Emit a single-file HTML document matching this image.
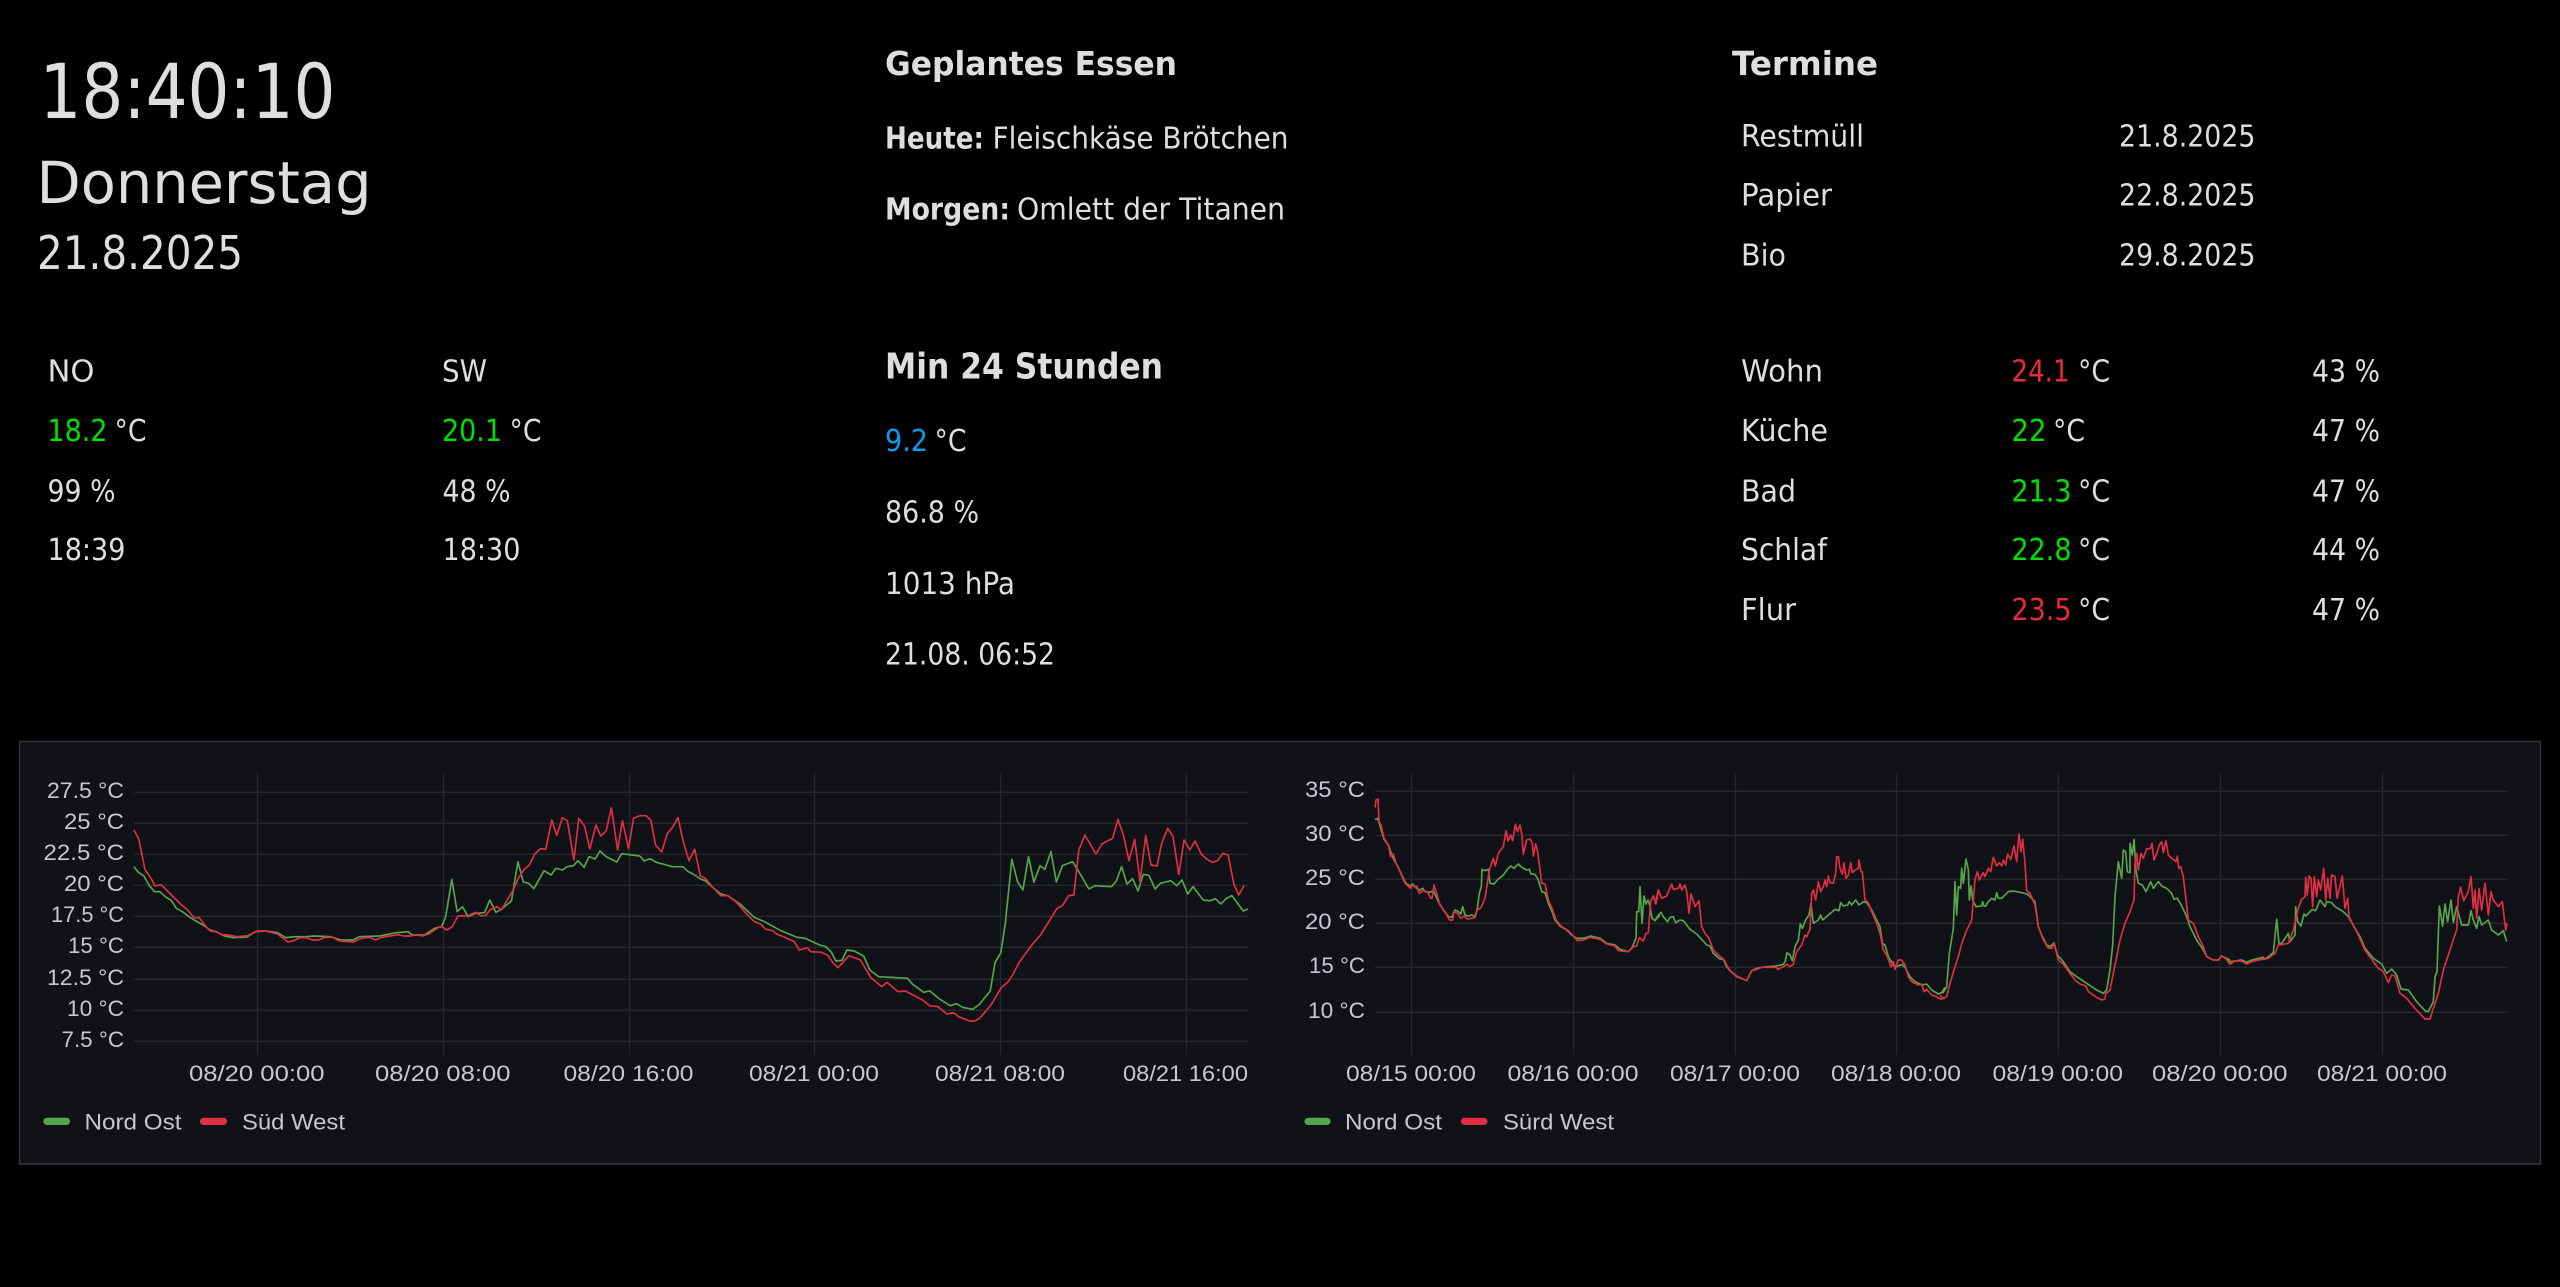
<!DOCTYPE html>
<html lang="de">
<head>
<meta charset="utf-8">
<title>Dashboard</title>
<style>
html,body{margin:0;padding:0;background:#000;width:2560px;height:1287px;overflow:hidden}
svg{display:block}
text{font-family:"DejaVu Sans","Liberation Sans",sans-serif;fill:#dedede;font-size:30px}
.b{font-weight:700}
.g{fill:#00e000}.r{fill:#e8293e}.c{fill:#0a9bec}
.a text{font-family:"Liberation Sans",sans-serif;font-size:22px;fill:#c6c6d6}
.l{fill:none;stroke-width:1.65;stroke-linejoin:round;vector-effect:non-scaling-stroke}
.gn{stroke:#56a64b}.rd{stroke:#e02f44}
.gr line{stroke:#27282d;stroke-width:1.4}
</style>
</head>
<body>
<svg width="2560" height="1287" viewBox="0 0 2560 1287" xmlns="http://www.w3.org/2000/svg">
<rect width="2560" height="1287" fill="#000"/>

<!-- clock -->
<text x="39.5" y="118" style="font-size:76px" textLength="296" lengthAdjust="spacingAndGlyphs">18:40:10</text>
<text x="36.5" y="203" style="font-size:58px" textLength="335" lengthAdjust="spacingAndGlyphs">Donnerstag</text>
<text x="37" y="269" style="font-size:46px" textLength="206" lengthAdjust="spacingAndGlyphs">21.8.2025</text>

<!-- outdoor -->
<text x="47.5" y="381.5" textLength="47" lengthAdjust="spacingAndGlyphs">NO</text>
<text x="47.5" y="441.2" class="g" textLength="60" lengthAdjust="spacingAndGlyphs">18.2</text>
<text x="114.5" y="441.2" textLength="32" lengthAdjust="spacingAndGlyphs">°C</text>
<text x="47.5" y="501.3" textLength="68" lengthAdjust="spacingAndGlyphs">99 %</text>
<text x="47.5" y="560.1" textLength="78" lengthAdjust="spacingAndGlyphs">18:39</text>
<text x="442" y="381.5" textLength="45" lengthAdjust="spacingAndGlyphs">SW</text>
<text x="442" y="441.2" class="g" textLength="60" lengthAdjust="spacingAndGlyphs">20.1</text>
<text x="509.5" y="441.2" textLength="32" lengthAdjust="spacingAndGlyphs">°C</text>
<text x="442.5" y="501.3" textLength="68" lengthAdjust="spacingAndGlyphs">48 %</text>
<text x="442.5" y="560.1" textLength="78" lengthAdjust="spacingAndGlyphs">18:30</text>

<!-- food -->
<text x="885" y="74.8" class="b" style="font-size:33px" textLength="292" lengthAdjust="spacingAndGlyphs">Geplantes Essen</text>
<text x="885" y="148.5" class="b" textLength="99" lengthAdjust="spacingAndGlyphs">Heute:</text>
<text x="992.5" y="148.5" textLength="296" lengthAdjust="spacingAndGlyphs">Fleischkäse Brötchen</text>
<text x="885" y="219.6" class="b" textLength="125" lengthAdjust="spacingAndGlyphs">Morgen:</text>
<text x="1017" y="219.6" textLength="268" lengthAdjust="spacingAndGlyphs">Omlett der Titanen</text>

<!-- min -->
<text x="885" y="378.3" class="b" style="font-size:36px" textLength="278" lengthAdjust="spacingAndGlyphs">Min 24 Stunden</text>
<text x="885" y="451.2" class="c" textLength="43" lengthAdjust="spacingAndGlyphs">9.2</text>
<text x="934.5" y="451.2" textLength="32" lengthAdjust="spacingAndGlyphs">°C</text>
<text x="885" y="522.4" textLength="94" lengthAdjust="spacingAndGlyphs">86.8 %</text>
<text x="885" y="594" textLength="130" lengthAdjust="spacingAndGlyphs">1013 hPa</text>
<text x="885" y="664.7" textLength="170" lengthAdjust="spacingAndGlyphs">21.08. 06:52</text>

<!-- dates -->
<text x="1732" y="74.8" class="b" style="font-size:33px" textLength="146" lengthAdjust="spacingAndGlyphs">Termine</text>
<text x="1741" y="146.5" textLength="123" lengthAdjust="spacingAndGlyphs">Restmüll</text>
<text x="2119" y="146.5" textLength="136.5" lengthAdjust="spacingAndGlyphs">21.8.2025</text>
<text x="1741" y="205.5" textLength="91" lengthAdjust="spacingAndGlyphs">Papier</text>
<text x="2119" y="205.5" textLength="136.5" lengthAdjust="spacingAndGlyphs">22.8.2025</text>
<text x="1741" y="265.3" textLength="45" lengthAdjust="spacingAndGlyphs">Bio</text>
<text x="2119" y="265.3" textLength="136.5" lengthAdjust="spacingAndGlyphs">29.8.2025</text>

<!-- indoor -->
<text x="1741" y="381.5" textLength="82" lengthAdjust="spacingAndGlyphs">Wohn</text>
<text x="2011.5" y="381.5" class="r" textLength="58" lengthAdjust="spacingAndGlyphs">24.1</text>
<text x="2078" y="381.5" textLength="32" lengthAdjust="spacingAndGlyphs">°C</text>
<text x="2312" y="381.5" textLength="68" lengthAdjust="spacingAndGlyphs">43 %</text>
<text x="1741" y="441.2" textLength="87" lengthAdjust="spacingAndGlyphs">Küche</text>
<text x="2011.5" y="441.2" class="g" textLength="35" lengthAdjust="spacingAndGlyphs">22</text>
<text x="2053" y="441.2" textLength="32" lengthAdjust="spacingAndGlyphs">°C</text>
<text x="2312" y="441.2" textLength="68" lengthAdjust="spacingAndGlyphs">47 %</text>
<text x="1741" y="501.3" textLength="55" lengthAdjust="spacingAndGlyphs">Bad</text>
<text x="2011.5" y="501.3" class="g" textLength="60" lengthAdjust="spacingAndGlyphs">21.3</text>
<text x="2078" y="501.3" textLength="32" lengthAdjust="spacingAndGlyphs">°C</text>
<text x="2312" y="501.3" textLength="68" lengthAdjust="spacingAndGlyphs">47 %</text>
<text x="1741" y="560.1" textLength="86" lengthAdjust="spacingAndGlyphs">Schlaf</text>
<text x="2011.5" y="560.1" class="g" textLength="60" lengthAdjust="spacingAndGlyphs">22.8</text>
<text x="2078" y="560.1" textLength="32" lengthAdjust="spacingAndGlyphs">°C</text>
<text x="2312" y="560.1" textLength="68" lengthAdjust="spacingAndGlyphs">44 %</text>
<text x="1741" y="619.8" textLength="55" lengthAdjust="spacingAndGlyphs">Flur</text>
<text x="2011.5" y="619.8" class="r" textLength="60" lengthAdjust="spacingAndGlyphs">23.5</text>
<text x="2078" y="619.8" textLength="32" lengthAdjust="spacingAndGlyphs">°C</text>
<text x="2312" y="619.8" textLength="68" lengthAdjust="spacingAndGlyphs">47 %</text>

<!-- panel -->
<rect x="19.5" y="741.5" width="2521" height="422.5" fill="#111217" stroke="#33343a" stroke-width="1.5"/>

<!-- chart 1 grid -->
<g class="gr">
<line x1="134" x2="1248" y1="792.3" y2="792.3"/><line x1="134" x2="1248" y1="823.3" y2="823.3"/><line x1="134" x2="1248" y1="854.3" y2="854.3"/><line x1="134" x2="1248" y1="885.3" y2="885.3"/><line x1="134" x2="1248" y1="916.3" y2="916.3"/><line x1="134" x2="1248" y1="947.3" y2="947.3"/><line x1="134" x2="1248" y1="979.3" y2="979.3"/><line x1="134" x2="1248" y1="1010.3" y2="1010.3"/><line x1="134" x2="1248" y1="1041.3" y2="1041.3"/>
<line x1="257.5" x2="257.5" y1="773" y2="1055"/><line x1="443.5" x2="443.5" y1="773" y2="1055"/><line x1="629.5" x2="629.5" y1="773" y2="1055"/><line x1="814.5" x2="814.5" y1="773" y2="1055"/><line x1="1000.5" x2="1000.5" y1="773" y2="1055"/><line x1="1186.5" x2="1186.5" y1="773" y2="1055"/>
<!-- chart 2 grid -->
<line x1="1375" x2="2508" y1="791.3" y2="791.3"/><line x1="1375" x2="2508" y1="835.3" y2="835.3"/><line x1="1375" x2="2508" y1="879.3" y2="879.3"/><line x1="1375" x2="2508" y1="923.3" y2="923.3"/><line x1="1375" x2="2508" y1="967.3" y2="967.3"/><line x1="1375" x2="2508" y1="1012.3" y2="1012.3"/>
<line x1="1411.5" x2="1411.5" y1="773" y2="1055"/><line x1="1573.5" x2="1573.5" y1="773" y2="1055"/><line x1="1735.5" x2="1735.5" y1="773" y2="1055"/><line x1="1896.5" x2="1896.5" y1="773" y2="1055"/><line x1="2058.5" x2="2058.5" y1="773" y2="1055"/><line x1="2220.5" x2="2220.5" y1="773" y2="1055"/><line x1="2382.5" x2="2382.5" y1="773" y2="1055"/>
</g>

<!-- chart 1 lines -->
<g transform="translate(0,730) scale(0.408163,0.333333)">
<polyline class="l gn" points="328,410 340,428 352,437 365,465 378,485 392,485 405,500 420,512 432,535 447,545 465,562 480,573 497,585 515,600 530,605 548,617 570,623 605,621 625,605 650,603 680,608 700,623 720,620 750,620 770,618 810,620 835,630 865,630 880,620 930,618 970,608 1000,605 1010,615 1040,615 1065,595 1082,590 1092,560 1107,448 1120,545 1133,530 1147,560 1165,550 1187,548 1200,510 1215,547 1228,538 1253,513 1269,395 1282,456 1295,460 1308,476 1333,422 1350,435 1362,415 1378,420 1390,410 1405,407 1416,392 1431,412 1443,380 1458,387 1470,363 1485,380 1511,396 1523,371 1568,378"/>
<polyline class="l rd" points="328,300 340,327 355,418 370,445 380,468 395,464 420,495 445,525 460,540 475,563 488,563 500,583 515,603 530,605 543,614 560,615 580,620 607,617 630,603 650,603 680,612 705,636 720,632 735,623 750,623 765,630 780,630 795,622 815,622 830,632 850,635 865,636 885,625 905,622 920,630 935,622 975,614 990,618 1005,618 1020,614 1035,618 1050,612 1075,592 1082,590 1095,600 1108,590 1122,558 1147,557 1165,547 1178,557 1190,557 1200,540 1218,530 1228,540 1255,485 1270,445 1283,420 1297,405 1310,372 1325,356 1337,358 1352,270 1364,316 1378,263 1390,272 1406,390 1418,265 1432,288 1445,357 1460,285 1472,318 1485,303 1498,233 1513,360 1525,272 1540,357 1552,265 1568,257"/>
</g>
<g transform="translate(640,730) scale(0.408163,0.333333)">
<polyline class="l gn" points="0,378 10,393 25,386 40,397 65,405 78,410 105,410 118,425 130,432 148,447 160,452 178,472 198,492 215,497 245,522 280,562 305,575 345,602 385,622 405,625 440,645 455,650 468,665 480,693 495,691 507,660 525,663 548,678 563,720 585,740 630,743 655,745 668,763 695,787 710,783 735,808 760,827 775,821 790,832 815,838 830,825 858,783 870,697 884,668 895,580 911,388 925,455 938,480 952,380 965,457 980,407 992,418 1007,365 1020,456 1035,407 1060,395 1075,425 1100,477 1115,467 1155,470 1167,453 1180,410 1193,462 1207,446 1220,483 1233,433 1247,436 1262,477 1275,460 1300,452 1315,467 1328,450 1342,492 1355,470 1380,510 1397,512 1410,506 1423,522 1437,505 1450,497 1478,543 1490,537"/>
<polyline class="l rd" points="0,257 15,257 27,272 38,345 53,366 67,310 80,292 93,263 107,340 120,392 134,358 148,438 160,445 178,472 198,497 215,497 235,515 260,550 280,575 295,582 308,598 325,602 335,612 355,622 378,635 390,660 410,653 418,665 445,667 460,676 472,697 485,713 512,677 540,690 565,742 592,770 605,757 632,785 650,783 690,808 710,827 730,830 752,852 768,848 780,860 808,873 820,873 832,865 860,825 885,773 900,758 912,737 930,695 960,645 980,617 1022,535 1035,527 1050,497 1063,495 1075,360 1090,315 1117,372 1132,342 1145,333 1158,325 1171,268 1185,318 1198,392 1212,328 1225,455 1239,317 1252,405 1267,408 1278,340 1293,295 1306,320 1320,433 1333,330 1347,360 1360,333 1375,372 1388,387 1402,397 1415,392 1428,370 1441,375 1455,462 1467,495 1480,466"/>
</g>

<!-- chart 2 lines -->
<g transform="translate(1370,780) scale(0.333333)">
<polyline class="l gn" points="15,118 22,115 28,130 35,155 42,178 55,195 62,215 72,240 85,262 100,295 108,310 120,318 128,312 140,325 150,330 158,325 165,335 180,337 190,332 205,365 220,390 235,410 245,412 255,390 265,395 272,402 278,380 285,405 295,408 305,405 315,410 322,385 328,340 334,320 336,268 345,272 355,268 360,310 372,312 385,297 400,285 412,268 422,258 432,265 445,252 455,262 470,270 478,268 483,282 495,283 505,300 515,335 525,338 535,370 545,392 555,420 570,438 590,450 605,465 620,475 640,475 662,468 690,475 710,490 735,495 750,508 775,515 785,505 798,475 800,395 806,395 810,320 816,430 822,348 828,372 834,360 840,378 846,415 855,422 870,405"/>
<polyline class="l rd" points="15,82 18,60 24,57 27,125 33,135 42,175 55,195 62,230 70,222 78,250 90,275 105,310 122,325 128,315 135,322 140,318 148,340 160,332 172,335 182,355 186,355 192,315 200,340 210,375 225,395 238,420 248,420 252,395 262,400 272,415 282,408 292,417 305,415 315,413 322,390 333,383 345,355 352,310 358,270 370,235 376,258 385,220 400,200 408,152 414,183 422,165 428,182 436,133 442,155 450,135 455,160 460,222 470,180 480,177 487,190 490,228 497,192 503,215 515,310 525,312 535,360 548,390 558,420 575,440 595,452 610,468 622,482 640,480 660,472 690,478 710,492 735,498 745,512 775,515 790,500 800,498 808,473 820,483 828,460 835,458 842,365 850,348 858,372 865,330 870,345"/>
</g>
<g transform="translate(1655,780) scale(0.333333)">
<polyline class="l gn" points="0,422 8,408 18,397 25,410 38,425 45,412 55,410 62,428 75,420 85,422 105,448 125,462 140,478 155,495 165,498 175,520 195,537 205,538 215,560 228,575 245,590 262,597 275,602 290,572 305,565 320,562 340,560 365,558 385,553 390,545 396,518 405,525 412,542 420,500 430,480 436,432 442,445 452,420 462,405 468,370 475,430 490,420 497,405 503,420 520,405 540,388 552,392 557,368 565,378 578,375 583,365 590,375 602,360 612,375 625,365 635,368 650,390 665,420 675,440 682,490 690,495 700,530 715,555 725,560 740,553 750,562 765,590 780,605 800,615 815,612 830,630 850,642 860,638 870,622"/>
<polyline class="l rd" points="0,372 10,330 20,355 35,348 50,312 55,328 70,325 75,312 80,330 90,315 95,335 102,400 108,342 120,380 132,362 140,440 150,460 162,475 175,510 190,525 205,537 215,555 228,575 245,588 275,602 290,572 305,568 320,562 365,562 368,568 385,560 395,553 405,560 415,553 425,515 440,495 450,465 455,470 465,448 470,340 475,330 482,360 490,305 497,335 505,320 510,300 515,320 520,288 525,308 535,310 542,280 545,230 550,230 555,265 562,283 567,248 573,295 580,285 587,248 592,278 600,270 610,265 612,240 618,275 622,275 630,360 640,368 650,395 665,430 675,460 685,510 695,525 708,560 715,545 720,568 730,540 740,540 750,555 760,590 770,605 790,615 800,612 807,635 815,628 830,645 845,650 855,657 870,655"/>
</g>
<g transform="translate(1940,780) scale(0.333333)">
<polyline class="l gn" points="0,640 10,637 20,620 28,520 40,445 45,305 50,405 55,320 62,325 65,265 70,310 78,237 85,270 88,360 93,318 98,360 108,380 125,378 128,365 132,378 138,378 142,368 155,355 165,360 170,338 175,355 185,355 205,335 220,333 240,337 262,342 275,355 285,365 295,440 305,465 320,495 330,500 342,488 352,525 370,545 390,575 410,590 440,610 470,630 490,640 500,630 510,570 518,495 525,350 535,245 545,295 550,210 557,215 562,275 570,278 570,190 577,225 582,178 588,270 595,310 607,315 618,335 632,305 640,325 655,305 665,318 680,325 695,340 702,358 712,355 725,378 738,405 750,440 770,480 790,510 800,530 820,540 835,540 845,528 860,535 870,540"/>
<polyline class="l rd" points="0,645 8,655 20,650 30,610 45,560 55,530 65,492 78,455 95,420 105,300 112,275 118,300 130,278 135,290 145,265 152,275 160,232 170,258 178,248 185,258 190,240 197,255 203,222 212,238 222,198 230,245 237,162 243,215 248,178 255,250 260,332 270,340 285,375 295,440 310,480 325,505 335,505 342,490 355,540 370,552 390,580 405,600 420,612 438,618 445,635 470,652 485,660 495,657 497,642 510,630 525,555 540,480 555,430 570,395 582,360 585,250 590,220 595,270 603,220 610,235 620,207 632,205 636,190 642,240 650,222 658,195 665,185 670,218 678,182 685,225 695,235 708,245 712,228 716,265 722,260 730,290 745,420 760,430 775,470 790,500 800,530 820,540 835,540 845,528 860,537 868,552"/>
</g>
<g transform="translate(2225,780) scale(0.333333)">
<polyline class="l gn" points="0,533 15,545 50,540 65,547 80,540 115,532 120,538 145,518 155,418 162,490 170,490 190,460 195,485 210,465 212,380 218,425 228,438 237,402 242,408 262,388 272,392 285,360 300,380 305,365 320,368 330,380 355,395 370,410 390,445 405,470 420,505 445,535 470,552 485,580 500,567 515,585 528,627 550,630 575,665 600,692 610,695 625,665 630,590 636,575 643,378 653,438 660,372 668,425 678,360 685,428 695,380 710,435 730,435 738,392 745,420 755,445 762,410 770,435 790,420 800,450 820,465 835,452 845,485"/>
<polyline class="l rd" points="0,533 15,552 30,543 50,543 65,552 80,545 100,540 130,535 150,520 160,495 190,490 205,450 220,385 230,358 240,350 242,292 247,345 252,288 258,295 263,380 268,290 275,350 280,300 287,330 296,265 302,360 308,295 315,355 320,285 330,290 336,355 352,288 360,385 368,355 372,410 395,455 420,510 445,545 460,565 475,575 490,608 500,585 510,588 525,640 545,655 570,685 600,717 615,717 625,685 640,640 655,570 675,510 685,478 695,450 700,350 707,322 716,362 730,335 738,290 745,385 750,330 755,415 762,325 770,390 780,310 790,405 798,335 805,360 820,380 832,365 842,450 847,430"/>
</g>

<g class="a">
<!-- chart 1 y labels -->
<text x="47" y="798" textLength="77" lengthAdjust="spacingAndGlyphs">27.5 °C</text>
<text x="64" y="829" textLength="60" lengthAdjust="spacingAndGlyphs">25 °C</text>
<text x="43.5" y="860" textLength="80.5" lengthAdjust="spacingAndGlyphs">22.5 °C</text>
<text x="64" y="891" textLength="60" lengthAdjust="spacingAndGlyphs">20 °C</text>
<text x="51" y="922" textLength="73" lengthAdjust="spacingAndGlyphs">17.5 °C</text>
<text x="68" y="953" textLength="56" lengthAdjust="spacingAndGlyphs">15 °C</text>
<text x="47" y="985" textLength="77" lengthAdjust="spacingAndGlyphs">12.5 °C</text>
<text x="67" y="1016" textLength="57" lengthAdjust="spacingAndGlyphs">10 °C</text>
<text x="61.5" y="1047" textLength="62.5" lengthAdjust="spacingAndGlyphs">7.5 °C</text>
<!-- chart 1 x labels -->
<text x="189" y="1081" textLength="135.5" lengthAdjust="spacingAndGlyphs">08/20 00:00</text>
<text x="375" y="1081" textLength="135.5" lengthAdjust="spacingAndGlyphs">08/20 08:00</text>
<text x="563.5" y="1081" textLength="130" lengthAdjust="spacingAndGlyphs">08/20 16:00</text>
<text x="749" y="1081" textLength="130" lengthAdjust="spacingAndGlyphs">08/21 00:00</text>
<text x="935" y="1081" textLength="130" lengthAdjust="spacingAndGlyphs">08/21 08:00</text>
<text x="1123" y="1081" textLength="125" lengthAdjust="spacingAndGlyphs">08/21 16:00</text>
<!-- chart 1 legend -->
<text x="84.5" y="1129.3" textLength="97" lengthAdjust="spacingAndGlyphs">Nord Ost</text>
<text x="242" y="1129.3" textLength="103" lengthAdjust="spacingAndGlyphs">Süd West</text>
<!-- chart 2 y labels -->
<text x="1305" y="797" textLength="60" lengthAdjust="spacingAndGlyphs">35 °C</text>
<text x="1305" y="841" textLength="60" lengthAdjust="spacingAndGlyphs">30 °C</text>
<text x="1305" y="885" textLength="60" lengthAdjust="spacingAndGlyphs">25 °C</text>
<text x="1305" y="929" textLength="60" lengthAdjust="spacingAndGlyphs">20 °C</text>
<text x="1309" y="973" textLength="56" lengthAdjust="spacingAndGlyphs">15 °C</text>
<text x="1308" y="1018" textLength="57" lengthAdjust="spacingAndGlyphs">10 °C</text>
<!-- chart 2 x labels -->
<text x="1346" y="1081" textLength="130" lengthAdjust="spacingAndGlyphs">08/15 00:00</text>
<text x="1507.5" y="1081" textLength="131" lengthAdjust="spacingAndGlyphs">08/16 00:00</text>
<text x="1670" y="1081" textLength="130" lengthAdjust="spacingAndGlyphs">08/17 00:00</text>
<text x="1831" y="1081" textLength="130" lengthAdjust="spacingAndGlyphs">08/18 00:00</text>
<text x="1992.5" y="1081" textLength="130.5" lengthAdjust="spacingAndGlyphs">08/19 00:00</text>
<text x="2152" y="1081" textLength="135.5" lengthAdjust="spacingAndGlyphs">08/20 00:00</text>
<text x="2317" y="1081" textLength="130" lengthAdjust="spacingAndGlyphs">08/21 00:00</text>
<!-- chart 2 legend -->
<text x="1345" y="1129.3" textLength="97" lengthAdjust="spacingAndGlyphs">Nord Ost</text>
<text x="1503" y="1129.3" textLength="111" lengthAdjust="spacingAndGlyphs">Sürd West</text>
</g>

<!-- legend swatches -->
<rect x="43.3" y="1117.7" width="26.7" height="7.3" rx="3.6" fill="#56a64b"/>
<rect x="200" y="1117.7" width="27" height="7.3" rx="3.6" fill="#e02f44"/>
<rect x="1304.5" y="1117.7" width="26" height="7.3" rx="3.6" fill="#56a64b"/>
<rect x="1461" y="1117.7" width="26.5" height="7.3" rx="3.6" fill="#e02f44"/>
</svg>
</body>
</html>
